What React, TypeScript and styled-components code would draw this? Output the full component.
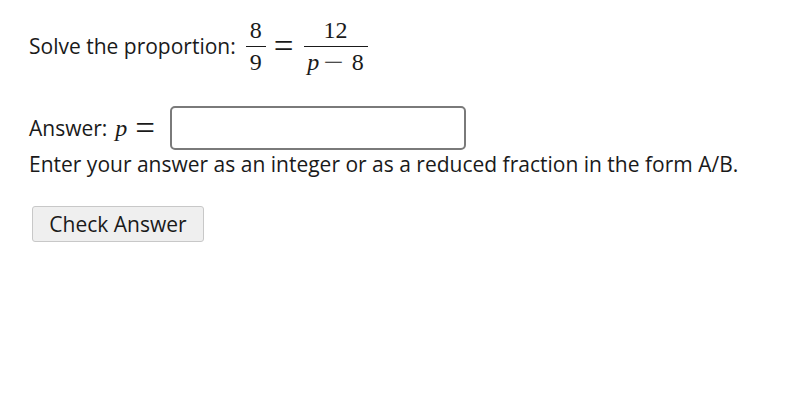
import styled, { createGlobalStyle } from "styled-components";

const GlobalStyle = createGlobalStyle`
    body {
        margin: 0;
        background: #ffffff;
        color: #1a1a1a;
        font-family: "Open Sans", "DejaVu Sans", sans-serif;
    }
`;

const Page = styled.div`
    padding: 18px 29px;
    font-size: 21px;
`;

const Line = styled.div`
    display: flex;
    align-items: center;
`;

const Math = styled.span<{ gap: number }>`
    display: inline-flex;
    align-items: center;
    margin-left: ${props => props.gap}px;
    font-family: "Liberation Serif", "DejaVu Serif", serif;
    font-size: 24px;
    line-height: 1;
`;

const Frac = styled.span`
    display: inline-flex;
    flex-direction: column;
    align-items: center;
`;

const Num = styled.span<{ pad: number }>`
    padding: 0 ${props => props.pad}px 4px;
    border-bottom: 1px solid #1a1a1a;
`;

const Den = styled.span`
    display: inline-flex;
    align-items: center;
    padding: 3px 2px 0;
`;

const Op = styled.span<{ left: number; right: number }>`
    font-size: 35px;
    margin: 0 ${props => props.right}px 0 ${props => props.left}px;
`;

const Minus = styled.span`
    display: inline-block;
    transform: scaleX(1.5);
    margin: 0 11px 0 8px;
`;

const Var = styled.i`
    font-style: italic;
`;

const AnswerRow = styled(Line)`
    margin-top: 32px;
`;

const Input = styled.input`
    width: 296px;
    height: 44px;
    box-sizing: border-box;
    border: 2px solid #7a7a7a;
    border-radius: 5px;
`;

const Hint = styled.div`
    margin: 0;
`;

const Button = styled.button`
    margin: 28px 0 0 3px;
    width: 172px;
    height: 36px;
    background: #efefef;
    border: 1px solid #c8c8c8;
    border-radius: 3px;
    font-family: inherit;
    font-size: 21px;
    color: #1a1a1a;
`;

export default function App() {
    return (
        <>
            <GlobalStyle />
            <Page>
                <Line>
                    <span>Solve the proportion:</span>
                    <Math gap={10}>
                        <Frac>
                            <Num pad={4}>8</Num>
                            <Den>9</Den>
                        </Frac>
                        <Op left={8} right={10}>=</Op>
                        <Frac>
                            <Num pad={20}>12</Num>
                            <Den>
                                <Var>p</Var>
                                <Minus>−</Minus>8
                            </Den>
                        </Frac>
                    </Math>
                </Line>
                <AnswerRow>
                    <span>Answer:</span>
                    <Math gap={8}>
                        <Var>p</Var>
                        <Op left={8} right={15}>=</Op>
                    </Math>
                    <Input />
                </AnswerRow>
                <Hint>Enter your answer as an integer or as a reduced fraction in the form A/B.</Hint>
                <Button>Check Answer</Button>
            </Page>
        </>
    );
}
